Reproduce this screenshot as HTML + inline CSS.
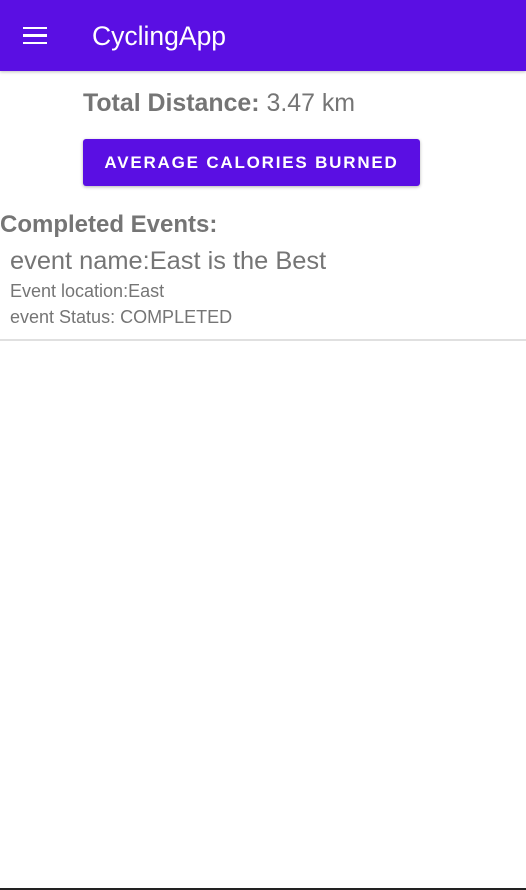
<!DOCTYPE html>
<html><head><meta charset="utf-8"><style>
body{margin:0;width:526px;height:890px;background:#fff;font-family:"Liberation Sans",sans-serif;position:relative;overflow:hidden;color:#757575}
.bar{position:absolute;left:0;top:0;width:526px;height:71px;background:#5a0fe3;box-shadow:0 1px 3px rgba(0,0,0,.25)}
.ham{position:absolute;left:23px;top:27px;width:24px}
.ham i{display:block;height:2.4px;background:#fff;margin-bottom:5px}
.title{position:absolute;left:92px;top:21px;font-size:26.5px;color:#fff}
.t{position:absolute;white-space:nowrap}
.btn{position:absolute;left:83px;top:139px;width:337px;height:47px;background:#5a0fe3;border-radius:3px;box-shadow:0 1px 3px rgba(0,0,0,.3);color:#fff;font-weight:bold;font-size:17px;letter-spacing:1.8px;text-align:center;line-height:47px}
.hr{position:absolute;left:0;top:339px;width:526px;height:2px;background:#e0e0e0}
.bot{position:absolute;left:0;top:888px;width:526px;height:2px;background:#222}
</style></head><body>
<div class="bar"><div class="ham"><i></i><i></i><i></i></div><div class="title">CyclingApp</div></div>
<div class="t" style="left:83px;top:89px;font-size:24.9px"><b>Total Distance:</b> 3.47 km</div>
<div class="btn">AVERAGE CALORIES BURNED</div>
<div class="t" style="left:0;top:211px;font-size:24px;font-weight:bold">Completed Events:</div>
<div class="t" style="left:10px;top:247px;font-size:25.4px">event name:East is the Best</div>
<div class="t" style="left:10px;top:281px;font-size:18px">Event location:East</div>
<div class="t" style="left:10px;top:307px;font-size:18px">event Status: COMPLETED</div>
<div class="hr"></div>
<div class="bot"></div>
</body></html>
